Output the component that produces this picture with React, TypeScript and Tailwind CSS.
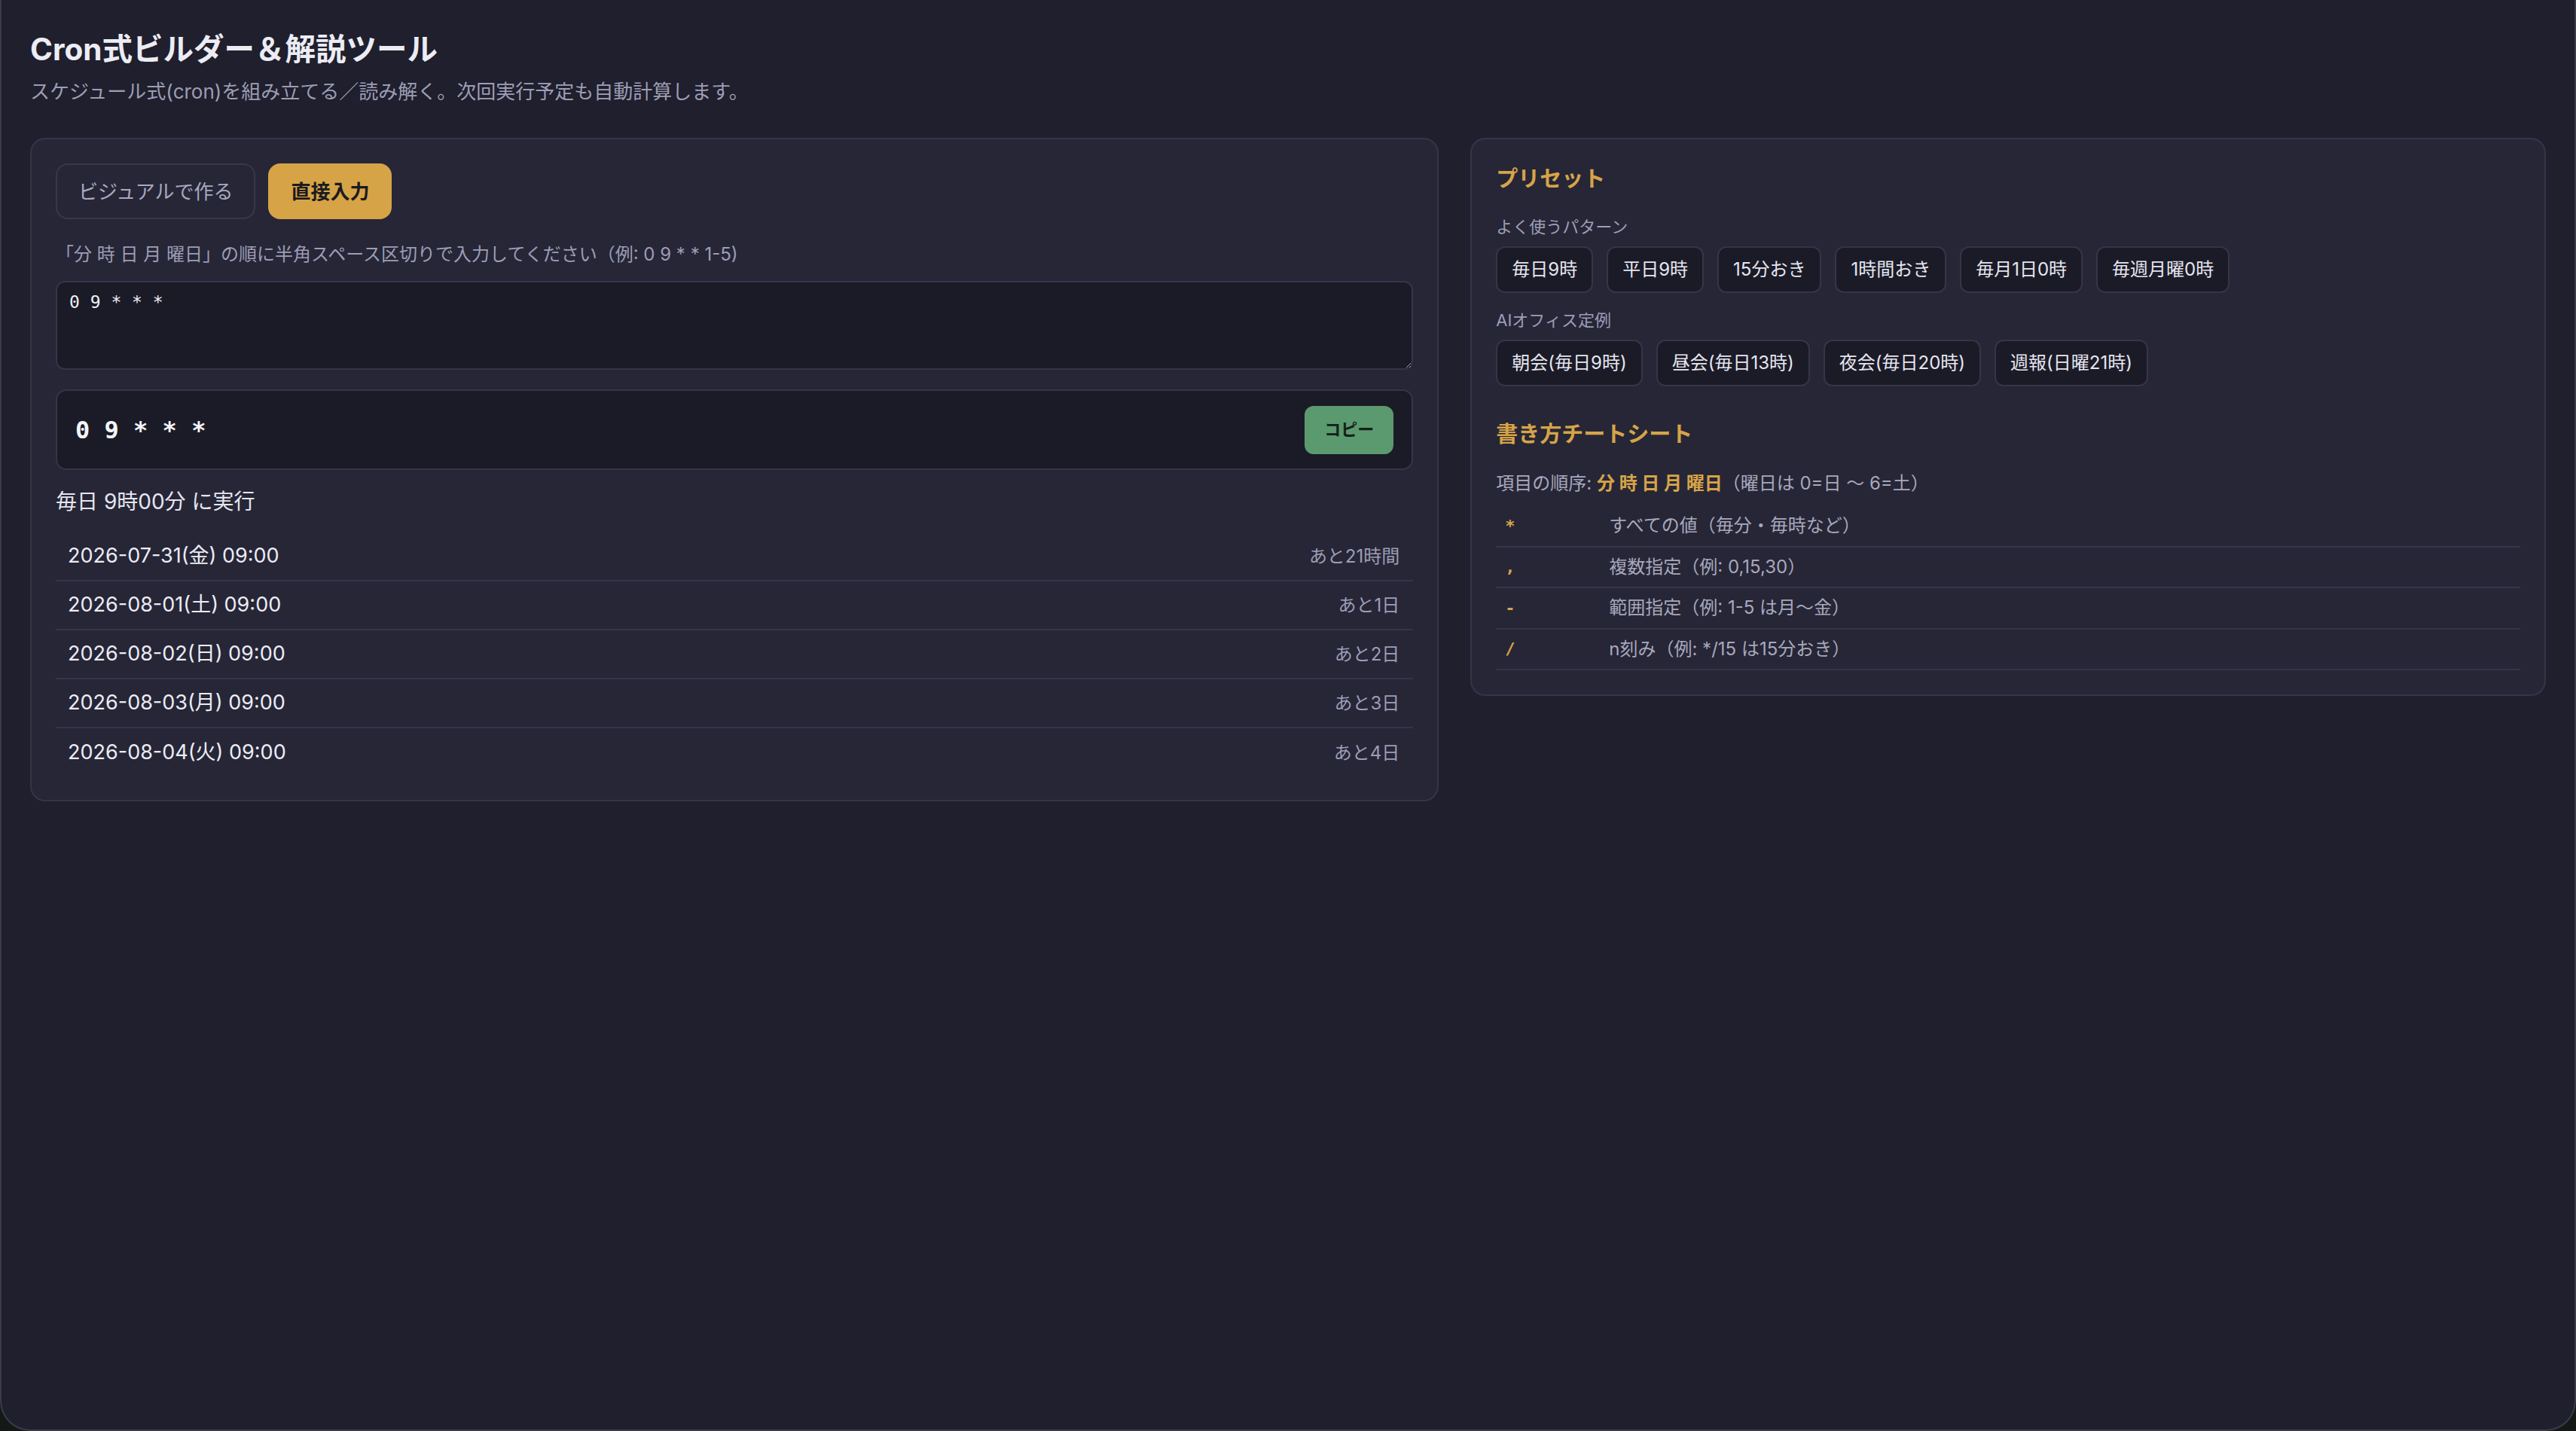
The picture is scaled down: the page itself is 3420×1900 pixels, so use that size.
import React from "react";

const commonPresets = ["毎日9時", "平日9時", "15分おき", "1時間おき", "毎月1日0時", "毎週月曜0時"];
const officePresets = ["朝会(毎日9時)", "昼会(毎日13時)", "夜会(毎日20時)", "週報(日曜21時)"];

const upcoming = [
  { at: "2026-07-31(金) 09:00", left: "あと21時間" },
  { at: "2026-08-01(土) 09:00", left: "あと1日" },
  { at: "2026-08-02(日) 09:00", left: "あと2日" },
  { at: "2026-08-03(月) 09:00", left: "あと3日" },
  { at: "2026-08-04(火) 09:00", left: "あと4日" },
];

const cheats = [
  { sym: "*", desc: "すべての値（毎分・毎時など）" },
  { sym: ",", desc: "複数指定（例: 0,15,30）" },
  { sym: "-", desc: "範囲指定（例: 1-5 は月〜金）" },
  { sym: "/", desc: "n刻み（例: */15 は15分おき）" },
];

function PresetButton({ label }: { label: string }) {
  return (
    <button className="h-[62px] rounded-[12px] border-2 border-[#35354a] bg-[#1b1b27] px-[19px] text-[24px] text-[#e6e6f0]">
      {label}
    </button>
  );
}

export default function App() {
  return (
    <div className="min-h-screen bg-[#141915]">
      <div className="min-h-screen rounded-b-[40px] border-x-2 border-b-2 border-[#3a3a4a] bg-[#1f1f2d] px-[38px] pb-10 pt-[40px] font-['Inter','Noto_Sans_CJK_JP',sans-serif] text-[#e6e6f0]">
        <h1 className="text-[40.5px] font-bold leading-[52px] text-[#ececf4]">Cron式ビルダー＆解説ツール</h1>
        <p className="mt-[12px] text-[26px] leading-[36px] text-[#9d9db5]">
          スケジュール式(cron)を組み立てる／読み解く。次回実行予定も自動計算します。
        </p>

        <div className="mt-[43px] grid grid-cols-[1.31fr_1fr] items-start gap-[42px]">
          {/* builder */}
          <section className="rounded-[20px] border-2 border-[#35354a] bg-[#262637] px-[32px] pb-[30px] pt-[32px]">
            <div className="flex gap-[17px]">
              <button className="h-[74px] rounded-[16px] border-2 border-[#38384c] px-[28px] text-[26px] text-[#a9a9bf]">
                ビジュアルで作る
              </button>
              <button className="h-[74px] rounded-[16px] bg-[#d6a447] px-[30px] text-[26px] font-bold text-[#1c1a20]">
                直接入力
              </button>
            </div>

            <p className="mt-[29px] text-[24px] leading-[36px] text-[#9d9db5]">
              「分 時 日 月 曜日」の順に半角スペース区切りで入力してください（例: 0 9 * * 1-5)
            </p>

            <textarea
              className="mt-[17px] block h-[118px] w-full rounded-[12px] border-2 border-[#35354a] bg-[#1b1b27] px-[16px] py-[10px] font-['DejaVu_Sans_Mono',monospace] text-[23px] leading-[32px] text-[#f0f0f6] outline-none"
              defaultValue="0 9 * * *"
            />

            <div className="mt-[26px] flex h-[107px] items-center justify-between rounded-[14px] border-2 border-[#35354a] bg-[#1b1b27] px-[24px]">
              <span className="font-['DejaVu_Sans_Mono',monospace] text-[32px] font-bold text-[#f4f4fa]">0 9 * * *</span>
              <button className="h-[64px] w-[118px] rounded-[12px] bg-[#5b9a6e] text-[22px] font-bold text-[#14201a]">
                コピー
              </button>
            </div>

            <p className="mt-[21px] text-[28px] leading-[42px] text-[#e6e6f0]">毎日 9時00分 に実行</p>

            <ul className="mt-[20px]">
              {upcoming.map((r) => (
                <li
                  key={r.at}
                  className="flex h-[65px] items-center justify-between border-b-2 border-[#34344a] pl-[16px] pr-[18px] last:border-b-0"
                >
                  <span className="text-[27px] text-[#ececf4]">{r.at}</span>
                  <span className="text-[24px] text-[#9d9db5]">{r.left}</span>
                </li>
              ))}
            </ul>
          </section>

          {/* presets & cheat sheet */}
          <section className="rounded-[20px] border-2 border-[#35354a] bg-[#262637] px-[32px] pb-[32px] pt-[32px]">
            <h2 className="text-[29px] font-bold leading-[42px] text-[#d6a447]">プリセット</h2>

            <p className="mt-[26px] text-[22px] leading-[32px] text-[#9d9db5]">よく使うパターン</p>
            <div className="mt-[10px] flex flex-wrap gap-[18px]">
              {commonPresets.map((p) => (
                <PresetButton key={p} label={p} />
              ))}
            </div>

            <p className="mt-[20px] text-[22px] leading-[32px] text-[#9d9db5]">AIオフィス定例</p>
            <div className="mt-[10px] flex flex-wrap gap-[18px]">
              {officePresets.map((p) => (
                <PresetButton key={p} label={p} />
              ))}
            </div>

            <h2 className="mt-[43px] text-[29px] font-bold leading-[42px] text-[#d6a447]">書き方チートシート</h2>

            <p className="mt-[27px] text-[24px] leading-[34px] text-[#a8a8bc]">
              項目の順序: <span className="font-bold text-[#d6a447]">分 時 日 月 曜日</span>（曜日は 0=日 〜 6=土）
            </p>

            <div className="mt-[13px]">
              {cheats.map((c) => (
                <div key={c.sym} className="flex h-[54.5px] items-center border-b-2 border-[#34344a]">
                  <span className="w-[150px] pl-[12px] font-['DejaVu_Sans_Mono',monospace] text-[22px] font-bold text-[#d6a447]">
                    {c.sym}
                  </span>
                  <span className="text-[24px] text-[#a8a8bc]">{c.desc}</span>
                </div>
              ))}
            </div>
          </section>
        </div>
      </div>
    </div>
  );
}
